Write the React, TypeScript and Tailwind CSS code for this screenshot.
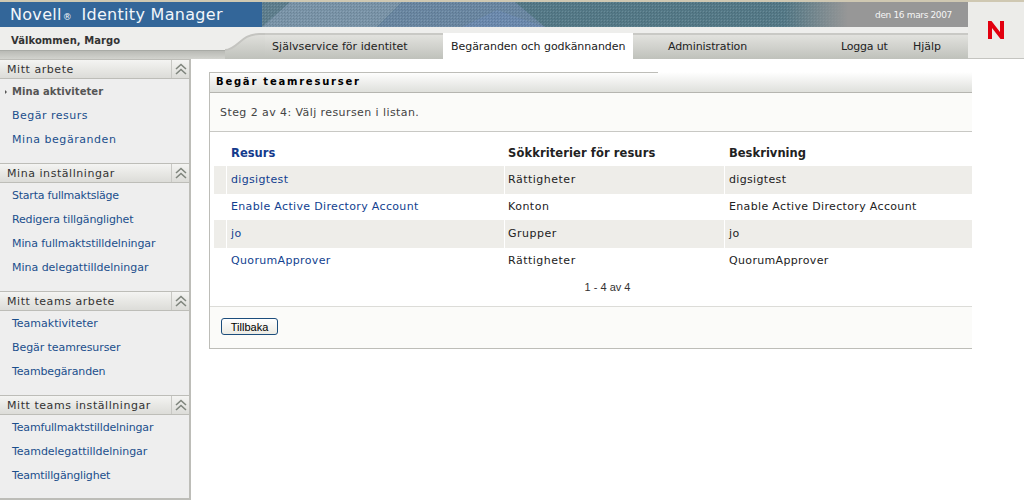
const FONT = "font-['DejaVu_Sans',Verdana,sans-serif]";

function Chevrons() {
  return (
    <svg width="14" height="12" viewBox="0 0 14 12" fill="none" stroke="#7f857d" strokeWidth="1.6">
      <path d="M2 6 L7 1.5 L12 6" />
      <path d="M2 11 L7 6.5 L12 11" />
    </svg>
  );
}

type Item = { label: string; track: string };

function Section({ title, items, active }: { title: string; items: Item[]; active?: string }) {
  return (
    <section className="pb-3">
      <div className="flex h-5 border-y border-[#bdbdb8] bg-[linear-gradient(#f4f4f2,#dcdcd8)]">
        <div className="flex-1 pl-[7px] text-[11px] leading-[20px] tracking-[0.55px] text-[#333]">{title}</div>
        <div className="flex w-[18px] items-center justify-center border-l border-[#c8c8c4]">
          <Chevrons />
        </div>
      </div>
      {items.map((it) =>
        it.label === active ? (
          <div key={it.label} className="relative h-6 pl-3 text-[10px] font-bold leading-[26px] tracking-[0.05px] text-[#555]">
            <span className="absolute left-[5px] top-[11px] h-0 w-0 border-y-[2px] border-l-[2px] border-y-transparent border-l-[#555]" />
            {it.label}
          </div>
        ) : (
          <div key={it.label} className={`h-6 pl-3 text-[11px] leading-[26px] text-[#1b4f8c] ${it.track}`}>{it.label}</div>
        ),
      )}
    </section>
  );
}

function Banner() {
  return (
    <svg className="absolute inset-0" width="706" height="25" viewBox="0 0 706 25" preserveAspectRatio="none">
      <defs>
        <pattern id="weave" width="3" height="3" patternUnits="userSpaceOnUse">
          <rect x="0" y="0" width="1" height="1" fill="#ffffff" fillOpacity="0.12" />
          <rect x="1" y="1" width="1" height="1" fill="#000000" fillOpacity="0.12" />
          <rect x="2" y="2" width="1" height="1" fill="#000000" fillOpacity="0.07" />
        </pattern>
        <linearGradient id="fade" x1="0" x2="1" y1="0" y2="0">
          <stop offset="0" stopColor="#979797" stopOpacity="0" />
          <stop offset="0.74" stopColor="#979797" stopOpacity="0" />
          <stop offset="0.83" stopColor="#979797" stopOpacity="1" />
        </linearGradient>
      </defs>
      <rect width="706" height="25" fill="#557a88" />
      <polygon points="0,0 28,0 0,25" fill="#5f7f8e" />
      <polygon points="0,25 28,0 140,0 115,25" fill="#7a94a8" />
      <polygon points="115,25 140,0 253,0 283,25" fill="#6a87a2" />
      <polygon points="200,25 235,8 283,25" fill="#6c8aae" />
      <rect width="706" height="25" fill="url(#weave)" />
      <rect width="706" height="25" fill="url(#fade)" />
    </svg>
  );
}

const rows = [
  ["digsigtest", "Rättigheter", "digsigtest", true],
  ["Enable Active Directory Account", "Konton", "Enable Active Directory Account", false],
  ["jo", "Grupper", "jo", true],
  ["QuorumApprover", "Rättigheter", "QuorumApprover", false],
] as const;

export default function App() {
  return (
    <div className={`${FONT} relative h-[502px] w-[1024px] overflow-hidden bg-white`}>
      {/* Header */}
      <header className="relative h-[59px] bg-[#eeeeec]">
        <div className="h-[2px] bg-[#cfc8b2]" />
        <div className="flex h-[25px]">
          <div className="w-[262px] bg-[#336699] pl-[10px] text-[16px] leading-[25px] tracking-[0.3px] text-[#f2f6fa]">
            Novell<span className="mx-[1px] text-[9px]">®</span> <span className="ml-[3px]">Identity Manager</span>
          </div>
          <div className="relative flex-1 overflow-hidden bg-[#979797] pr-[16px] text-right text-[9px] leading-[26px] tracking-[-0.35px] text-[#f5f5f5]">
            <Banner />
            <span className="relative">den 16 mars 2007</span>
          </div>
          <div className="w-[56px]" />
        </div>
        <div className="flex h-8">
          <div className="flex w-[225px] flex-col">
            <div className="h-[23px] pl-[11px] text-[10px] font-bold leading-[27px] tracking-[0.05px] text-[#333]">
              Välkommen, Margo
            </div>
            <div className="h-[9px] border-t border-[#a9aba6] bg-[linear-gradient(#b9bab5,#d2d3ce)]" />
          </div>
          <svg className="block shrink-0" width="40" height="32" viewBox="0 0 40 32">
            <defs>
              <linearGradient id="strip" x1="0" x2="0" y1="6" y2="32" gradientUnits="userSpaceOnUse">
                <stop offset="0" stopColor="#e2e2de" />
                <stop offset="1" stopColor="#bfc1bb" />
              </linearGradient>
            </defs>
            <path d="M0 23 C12 23 16 7 34 7 L40 7 L40 32 L0 32 Z" fill="url(#strip)" />
            <path d="M0 23 C12 23 16 7 34 7 L40 7" fill="none" stroke="#c4c4c0" strokeWidth="2" />
          </svg>
          <nav className="mr-14 mt-[6px] flex h-[26px] flex-1 whitespace-nowrap border-t-2 border-[#c9c9c5] bg-[linear-gradient(#e2e2de,#bfc1bb)] text-[11px] leading-[24px] text-[#222]">
            <span className="ml-[7px] w-[171px] tracking-[0.05px]">Självservice för identitet</span>
            <span className="-mt-[2px] h-[26px] w-[190px] bg-white pl-2 pt-[2px] tracking-[-0.05px]">Begäranden och godkännanden</span>
            <span className="ml-[35px] w-[173px] tracking-[-0.1px]">Administration</span>
            <span className="w-[72px] tracking-[-0.2px]">Logga ut</span>
            <span>Hjälp</span>
          </nav>
        </div>
        <div className="absolute right-0 top-[2px] flex h-[57px] w-[56px] justify-center border-b border-[#c4c4c0] bg-[#ecece9] pt-[18px]">
          <svg width="18" height="20" viewBox="0 0 18 20">
            <path d="M1 19 V1 H4.5 L13 12 V1 H17 V19 H13.5 L5 8 V19 Z" fill="#e2000f" />
          </svg>
        </div>
      </header>

      <div className="flex">
        {/* Sidebar */}
        <aside className="h-[441px] w-[191px] border-r-2 border-b-2 border-[#bdbdb8] bg-[#eeeeee]">
          <Section
            title="Mitt arbete"
            active="Mina aktiviteter"
            items={[
              { label: "Mina aktiviteter", track: "" },
              { label: "Begär resurs", track: "tracking-[0.5px]" },
              { label: "Mina begäranden", track: "tracking-[0.55px]" },
            ]}
          />
          <Section
            title="Mina inställningar"
            items={[
              { label: "Starta fullmaktsläge", track: "tracking-[-0.23px]" },
              { label: "Redigera tillgänglighet", track: "tracking-[-0.15px]" },
              { label: "Mina fullmaktstilldelningar", track: "tracking-[-0.1px]" },
              { label: "Mina delegattilldelningar", track: "tracking-[-0.02px]" },
            ]}
          />
          <Section
            title="Mitt teams arbete"
            items={[
              { label: "Teamaktiviteter", track: "tracking-[0px]" },
              { label: "Begär teamresurser", track: "tracking-[-0.08px]" },
              { label: "Teambegäranden", track: "tracking-[-0.15px]" },
            ]}
          />
          <Section
            title="Mitt teams inställningar"
            items={[
              { label: "Teamfullmaktstilldelningar", track: "tracking-[-0.16px]" },
              { label: "Teamdelegattilldelningar", track: "tracking-[-0.04px]" },
              { label: "Teamtillgänglighet", track: "tracking-[-0.18px]" },
            ]}
          />
        </aside>

        {/* Main */}
        <main className="ml-[18px] mt-[13px] h-[277px] w-[763px] border-b border-l border-[#bdbdb8]">
          <div className="h-[21px] border-b border-[#b5b5b0] bg-[linear-gradient(#ffffff,#dfe0dc)] pl-[6px] text-[10px] font-bold leading-[20px] tracking-[1.77px] text-black">
            <div className="absolute top-[72px] left-[209px] h-px w-[449px] bg-[#bdbdb8]" />
            Begär teamresurser
          </div>
          <div className="h-[39px] border-b border-[#c8c8c4] bg-[#fbfbf9] pl-[10px] text-[11px] leading-[40px] tracking-[0.42px] text-[#444]">
            Steg 2 av 4: Välj resursen i listan.
          </div>
          <div className="h-[174px] pl-1">
            <div className="grid h-[34px] grid-cols-[13px_278px_220px_1fr] text-[11.5px] font-bold leading-[42px] tracking-[0.03px] text-[#222]">
              <span />
              <span className="pl-1 text-[#143a8c]">Resurs</span>
              <span className="pl-[3px] tracking-[0.1px]">Sökkriterier för resurs</span>
              <span className="pl-1">Beskrivning</span>
            </div>
            {rows.map(([a, b, c, shaded]) => (
              <div key={a} className="grid h-[27px] grid-cols-[13px_278px_220px_1fr] text-[11px] tracking-[0.34px] leading-[28px] text-[#222]">
                <span className={`mb-px mr-px ${shaded ? "bg-[#eeede9]" : ""}`} />
                <span className={`mb-px mr-px pl-1 text-[#123f8f] ${shaded ? "bg-[#eeede9]" : ""}`}>{a}</span>
                <span className={`mb-px mr-px pl-[3px] tracking-[0.5px] ${shaded ? "bg-[#eeede9]" : ""}`}>{b}</span>
                <span className={`mb-px pl-1 ${shaded ? "bg-[#eeede9]" : ""}`}>{c}</span>
              </div>
            ))}
            <div className="mt-[3px] pl-[29px] text-center font-['Liberation_Sans',Arial,sans-serif] text-[11px] leading-5 text-[#333]">1 - 4 av 4</div>
          </div>
          <div className="h-[42px] border-t border-[#dcdcd8] bg-[#fbfbf9] pl-[11px] pt-[11px]">
            <button className="block h-[17px] w-[57px] rounded-[3px] border border-[#1c4d7c] bg-[linear-gradient(#ffffff,#ecebe4)] font-['Liberation_Sans',Arial,sans-serif] text-[11px] leading-[14px] text-black">
              Tillbaka
            </button>
          </div>
        </main>
      </div>
    </div>
  );
}
